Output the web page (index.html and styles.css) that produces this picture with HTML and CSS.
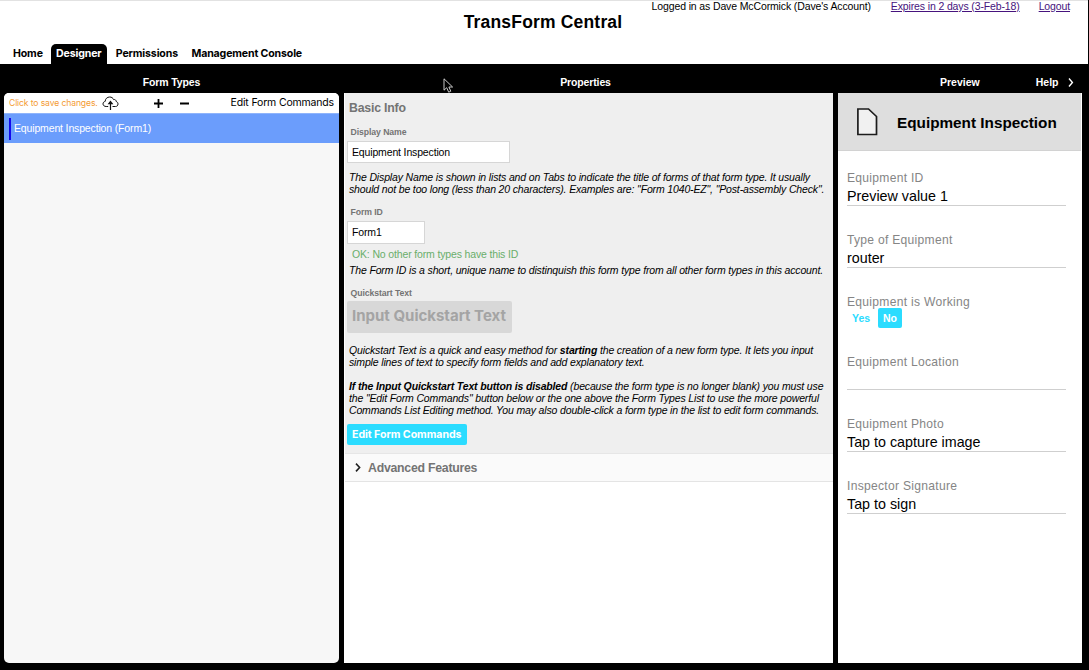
FILE: index.html
```html
<!DOCTYPE html>
<html lang="en">
<head>
<meta charset="utf-8">
<title>TransForm Central</title>
<link rel="stylesheet" href="styles.css">
</head>
<body>
<div class="app">
  <header class="header">
    <div class="account">
      <span class="account-name">Logged in as Dave McCormick (Dave's Account)</span>
      <a class="account-expiry" href="#">Expires in 2 days (3-Feb-18)</a>
      <a class="account-logout" href="#">Logout</a>
    </div>
    <h1 class="title"><span>TransForm Central</span></h1>
    <nav class="tabs">
      <a class="tab tab-home">Home</a>
      <a class="tab tab-active">Designer</a>
      <a class="tab tab-perm">Permissions</a>
      <a class="tab tab-console">Management Console</a>
    </nav>
  </header>
  <main class="workspace">
    <section class="column">
      <h2 class="column-title"><span class="ct-types">Form Types</span></h2>
      <div class="panel types">
        <div class="toolbar">
          <span class="save">Click to save changes.</span>
          <svg class="cloud" width="17" height="15" viewBox="0 0 17 15" fill="none" stroke="#111">
            <path d="M6.2 10.5H4.2C2.2 10.5 1 9.3 1 7.9C1 6.5 2 5.6 3.2 5.4C3.2 2.8 5.2 1 7.7 1C9.6 1 11 2 11.6 3.6C13 3.2 14.2 4.2 14.2 5.5C15.3 5.8 16 6.8 16 8C16 9.5 15 10.5 13.5 10.5H10.5" stroke-width="1"/>
            <path d="M8.5 14V6.2" stroke-width="1.2"/>
            <path d="M5.6 8.2L8.5 4.6L11.4 8.2Z" fill="#111" stroke="none"/>
          </svg>
          <svg class="plus" width="9" height="9" viewBox="0 0 9 9" stroke="#000" stroke-width="1.8"><path d="M0 4.5H9M4.5 0V9"/></svg>
          <svg class="minus" width="9" height="9" viewBox="0 0 9 9" stroke="#000" stroke-width="1.8"><path d="M0 4.5H9"/></svg>
          <span class="edit-link">Edit Form Commands</span>
        </div>
        <div class="form-row"><span class="form-name">Equipment Inspection (Form1)</span></div>
      </div>
    </section>
    <section class="column">
      <h2 class="column-title"><span class="ct-props">Properties</span></h2>
      <div class="panel props">
        <div class="basic">
          <h3 class="section-title"><span>Basic Info</span></h3>
          <div class="label">Display Name</div>
          <div class="field field-name">Equipment Inspection</div>
          <p class="help">The Display Name is shown in lists and on Tabs to indicate the title of forms of that form type. It usually<br>should not be too long (less than 20 characters). Examples are: "Form 1040-EZ", "Post-assembly Check".</p>
          <div class="label">Form ID</div>
          <div class="field field-id">Form1</div>
          <div class="ok">OK: No other form types have this ID</div>
          <p class="help help-id">The Form ID is a short, unique name to distinquish this form type from all other form types in this account.</p>
          <div class="label">Quickstart Text</div>
          <div class="button-disabled">Input Quickstart Text</div>
          <p class="help help-quick">Quickstart Text is a quick and easy method for <b>starting</b> the creation of a new form type. It lets you input<br>simple lines of text to specify form fields and add explanatory text.</p>
          <p class="help help-disabled"><b>If the Input Quickstart Text button is disabled</b> (because the form type is no longer blank) you must use<br>the "Edit Form Commands" button below or the one above the Form Types List to use the more powerful<br>Commands List Editing method. You may also double-click a form type in the list to edit form commands.</p>
          <div class="button">Edit Form Commands</div>
        </div>
        <div class="advanced">
          <svg width="6" height="9" viewBox="0 0 6 9" fill="none" stroke="#222" stroke-width="1.6"><path d="M1 .6L4.6 4.5L1 8.4"/></svg>
          <span>Advanced Features</span>
        </div>
      </div>
      <svg class="cursor" width="11" height="16" viewBox="0 0 11 16"><path d="M1 .8V12.2L3.7 9.7L5.7 14.2L7.8 13.2L5.9 9H9.6Z" fill="#000" stroke="#ddd" stroke-width=".9"/></svg>
    </section>
    <section class="column">
      <h2 class="column-title preview-head">
        <span class="ct-preview">Preview</span>
        <span class="ct-help">Help</span>
        <svg width="6" height="9" viewBox="0 0 6 9" fill="none" stroke="#fff" stroke-width="1.4"><path d="M1 .5L4.4 4.5L1 8.5"/></svg>
      </h2>
      <div class="panel preview">
        <div class="preview-title">
          <svg width="22" height="28" viewBox="0 0 22 28"><path d="M1.9 1H12.5L20.5 8.5V26.5H1.9Z" fill="#f1f1f1" stroke="#1c1c1c" stroke-width="1.7"/></svg>
          <span>Equipment Inspection</span>
        </div>
        <div class="items">
          <div class="item"><div class="name">Equipment ID</div><div class="value">Preview value 1</div></div>
          <div class="item"><div class="name">Type of Equipment</div><div class="value">router</div></div>
          <div class="item item-choice"><div class="name">Equipment is Working</div><div class="choices"><span class="yes">Yes</span><span class="no">No</span></div></div>
          <div class="item"><div class="name">Equipment Location</div><div class="value"></div></div>
          <div class="item"><div class="name">Equipment Photo</div><div class="value">Tap to capture image</div></div>
          <div class="item"><div class="name">Inspector Signature</div><div class="value">Tap to sign</div></div>
        </div>
      </div>
    </section>
  </main>
</div>
</body>
</html>
```
FILE: styles.css
```css
* { box-sizing: border-box; }
body { margin: 0; background: #000; font-family: "Liberation Sans", Arial, sans-serif; color: #000; }
h1, h2, h3, p { margin: 0; font-size: inherit; }
svg { display: block; flex: none; }
.app { width: 1089px; height: 670px; overflow: hidden; white-space: nowrap; }

.header { height: 64px; margin-right: 1px; background: #fff; border-top: 1px solid #e2e2e2; }
.account { height: 11px; padding-right: 18px; display: flex; justify-content: flex-end; font-size: 10.5px; line-height: 11px; letter-spacing: -.13px; }
.account a { color: #46137d; text-underline-offset: 1px; }
.account-expiry { margin-left: 20px; }
.account-logout { margin-left: 19px; }
.title { height: 20px; font-size: 17.5px; line-height: 20px; text-align: center; padding-right: 2px; letter-spacing: .18px; }
.tabs { height: 20px; margin-top: 12px; padding-left: 13px; display: flex; font: 700 10.6px/20px Inter, sans-serif; letter-spacing: -.15px; }
.tab-active { width: 56px; margin: 0 9px 0 8px; border-radius: 5px 5px 0 0; background: #000; color: #fff; text-align: center; }
.tab-console { margin-left: 13.5px; }

.workspace { height: 606px; padding: 0 7px 7px 4px; display: grid; grid-template-columns: 335px 489px 244px; column-gap: 5px; }
.column { position: relative; display: flex; flex-direction: column; }
.column-title { height: 29px; padding-top: 8px; color: #fff; font-size: 10.5px; line-height: 20px; text-align: center; letter-spacing: -.13px; }
.ct-props { margin-left: -6px; }
.panel { flex: 1; background: #fff; overflow: hidden; }
.types { background: #f7f7f7; border-radius: 5px; }
.toolbar { height: 20px; padding: 0 5px; display: flex; align-items: center; background: #fff; }
.save { width: 93px; color: #f49b34; font: 8.6px/20px Inter, sans-serif; letter-spacing: -.12px; }
.plus { margin-left: 35px; }
.minus { margin-left: 17px; }
.edit-link { margin-left: auto; font: 10.5px/20px Inter, sans-serif; letter-spacing: -.17px; }
.form-row { height: 30px; padding: 4px; background: #6b9dfc; border-top: 1px solid #8fb4fb; }
.form-name { display: block; height: 22px; margin-left: 1px; padding-left: 3px; border-left: 2px solid #1208ee; color: #fff; font-size: 10.5px; line-height: 21px; letter-spacing: -.15px; }
.cursor { position: absolute; left: 99px; top: 14px; }

.basic { height: 361px; padding: 8px 3px 0; background: #efefef; border-bottom: 1px solid #e6e6e6; margin-left: 1px; font-size: 10.5px; letter-spacing: -.15px; }
.section-title { height: 14px; padding-left: 1px; color: #747474; font-size: 12.3px; line-height: 14px; letter-spacing: -.2px; }
.label { height: 10px; margin-top: 12px; padding-left: 2.5px; color: #747474; font-size: 8.7px; font-weight: 700; line-height: 10px; letter-spacing: -.08px; }
.field { height: 22px; margin-top: 4px; margin-left: -1px; padding-left: 4px; border: 1px solid #d6d6d6; background: #fff; line-height: 21px; }
.field-name { width: 163px; }
.field-id { width: 78px; height: 23px; }
.help { margin-top: 8px; padding-left: 1px; line-height: 12px; font-style: italic; }
.ok { height: 13px; margin-top: 4px; padding-left: 4px; color: #69ae6b; line-height: 13px; }
.help-id { margin-top: 3px; }
.button-disabled { width: 165px; height: 32px; margin: 3px 0 0 -1px; padding-left: 5px; background: #d8d8d8; border-radius: 2px; color: #a4a4a4; font: 700 15px/30px Inter, sans-serif; letter-spacing: 0; }
.help-quick { margin-top: 11px; }
.help-disabled { margin-top: 12px; }
.button { width: 120px; height: 21px; margin: 8px 0 0 -1px; padding-left: 5px; background: #2bdcff; border-radius: 2px; color: #fff; font: 700 10.6px/21px Inter, sans-serif; letter-spacing: -.05px; }
.advanced { height: 28px; margin-left: 1px; padding-left: 10px; display: flex; align-items: center; gap: 7px; background: #fafafa; border-bottom: 1px solid #e4e4e4; color: #747474; font-size: 12.3px; font-weight: 700; letter-spacing: -.25px; }

.preview-head { display: flex; align-items: center; padding-top: 7px; letter-spacing: 0; }
.ct-preview { margin-left: 102px; }
.ct-help { margin-left: 56px; margin-right: 9.5px; }
.preview { padding-right: 1px; }
.preview-title { height: 58px; padding-left: 18px; display: flex; align-items: center; gap: 19px; background: #dedede; border-bottom: 1px solid #d2d2d2; font-size: 15.3px; font-weight: 700; }
.preview-title span { padding-top: 2px; }
.items { width: 228px; padding: 19px 0 0 9px; }
.item { height: 62px; }
.item-choice { height: 60px; }
.name { height: 16px; color: #858585; font-size: 12.1px; line-height: 16px; letter-spacing: .28px; }
.value { height: 20px; border-bottom: 1px solid #cfcfcf; font-size: 14.3px; line-height: 20px; }
.choices { display: flex; font-size: 10.5px; font-weight: 700; line-height: 20px; margin-top: -2px; }
.yes { width: 31px; padding-left: 5px; color: #2bdcff; }
.no { width: 24px; height: 20px; text-align: center; background: #2bdcff; border-radius: 2px; color: #fff; }
```
